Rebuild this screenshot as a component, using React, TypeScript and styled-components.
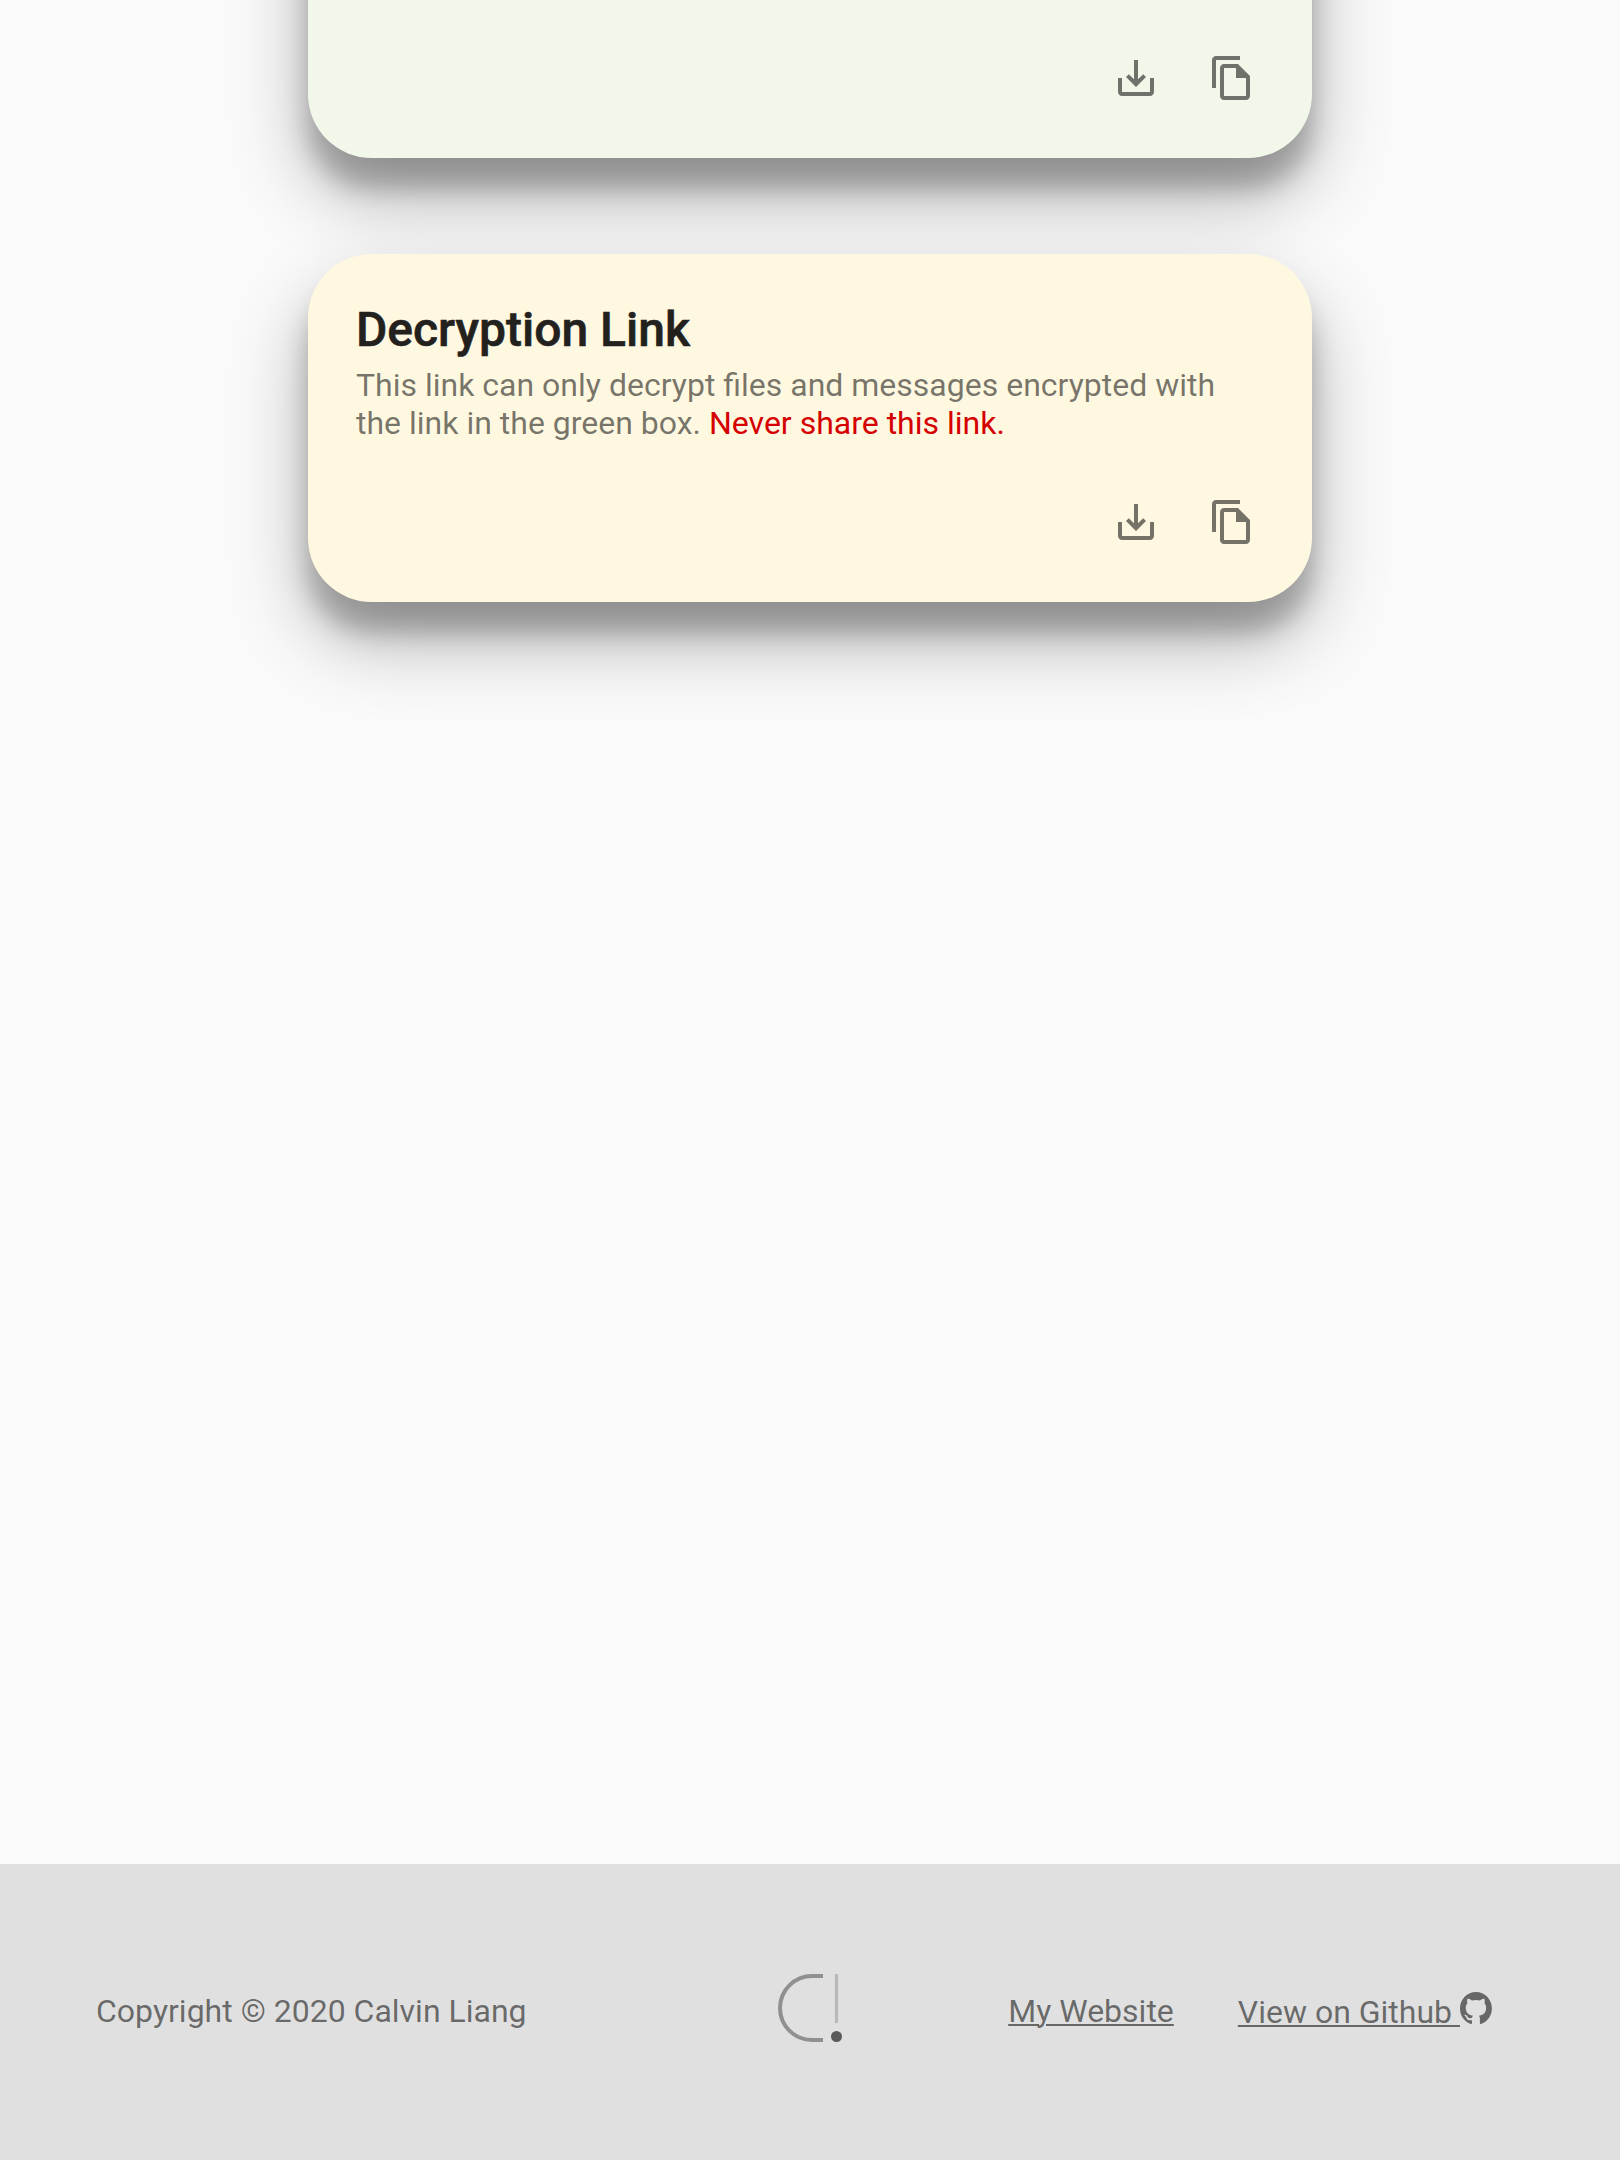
import React from "react";
import styled, { createGlobalStyle } from "styled-components";

const GlobalStyle = createGlobalStyle`
  * { box-sizing: border-box; }
  body {
    margin: 0;
    background: #fafafa;
    font-family: Roboto, "Liberation Sans", sans-serif;
    -webkit-font-smoothing: antialiased;
  }
`;

const Page = styled.div`
  height: 2160px;
  display: flex;
  flex-direction: column;
  overflow: hidden;
`;

const Main = styled.main`
  flex: 1;
  display: flex;
  flex-direction: column;
  align-items: center;
  gap: 96px;
`;

const Card = styled.section<{ $color: string; $cut?: boolean }>`
  width: 1004px;
  height: 348px;
  margin-top: ${(p) => (p.$cut ? -190 : 0)}px;
  padding: 48px;
  border-radius: 64px;
  background: ${(p) => p.$color};
  box-shadow: 0 38px 76px rgba(0, 0, 0, 0.3), 0 30px 24px rgba(0, 0, 0, 0.22);
  display: flex;
  flex-direction: column;
`;

const Title = styled.h2`
  margin: 0;
  font-size: 48px;
  line-height: 56px;
  font-weight: 500;
  -webkit-text-stroke: 0.6px #22211e;
  color: #22211e;
`;

const Description = styled.p`
  margin: 8px 0 0;
  font-size: 32px;
  line-height: 38px;
  color: rgba(0, 0, 0, 0.54);
`;

const Warning = styled.span`
  color: #d50000;
`;

const Actions = styled.div`
  margin: auto -16px -16px 0;
  display: flex;
  justify-content: flex-end;
`;

const IconButton = styled.button`
  width: 96px;
  height: 96px;
  padding: 24px;
  border: 0;
  background: none;
  color: rgba(0, 0, 0, 0.54);
  svg {
    display: block;
    width: 48px;
    height: 48px;
    fill: currentColor;
  }
`;

const Footer = styled.footer`
  height: 296px;
  padding: 0 96px 2px;
  display: grid;
  grid-template-columns: 1fr 64px 1fr;
  align-items: center;
  background: #e0e0e0;
  color: rgba(0, 0, 0, 0.54);
  font-size: 32px;
  line-height: 38px;
`;

const Copyright = styled.div`
  white-space: nowrap;
`;

const Logo = styled.svg`
  display: block;
  width: 64px;
  height: 68px;
  margin-bottom: 6px;
`;

const Links = styled.nav`
  height: 38px;
  padding-right: 32px;
  display: flex;
  justify-content: flex-end;
  align-items: flex-start;
  gap: 64px;
`;

const Link = styled.a`
  color: inherit;
  text-decoration: underline;
  text-decoration-thickness: 2px;
  text-underline-offset: 2px;
  white-space: pre;
`;

const GithubMark = styled.svg`
  width: 32px;
  height: 32px;
  vertical-align: -1px;
  fill: currentColor;
`;

function CardActions() {
  return (
    <Actions>
      <IconButton aria-label="Download">
        <svg viewBox="0 0 24 24">
          <path d="M19 12v7H5v-7H3v7c0 1.1.9 2 2 2h14c1.1 0 2-.9 2-2v-7h-2zm-6 .67l2.59-2.58L17 11.5l-5 5-5-5 1.41-1.41L11 12.67V3h2v9.67z" />
        </svg>
      </IconButton>
      <IconButton aria-label="Copy">
        <svg viewBox="0 0 24 24">
          <path d="M16 1H4c-1.1 0-2 .9-2 2v14h2V3h12V1zm-1 4H8c-1.1 0-1.99.9-1.99 2L6 21c0 1.1.89 2 1.99 2H19c1.1 0 2-.9 2-2V11l-6-6zM8 21V7h6v5h5v9H8z" />
        </svg>
      </IconButton>
    </Actions>
  );
}

export default function App() {
  return (
    <Page>
      <GlobalStyle />
      <Main>
        <Card $color="#f1f8e9" $cut>
          <CardActions />
        </Card>
        <Card $color="#fff8e1">
          <Title>Decryption Link</Title>
          <Description>
            This link can only decrypt files and messages encrypted with the link in the green box.{" "}
            <Warning>Never share this link.</Warning>
          </Description>
          <CardActions />
        </Card>
      </Main>
      <Footer>
        <Copyright>Copyright © 2020 Calvin Liang</Copyright>
        <Logo viewBox="0 0 64 68">
          <path d="M45 2H34a32 32 0 0 0 0 64h11" fill="none" stroke="#909090" strokeWidth="4" />
          <path d="M58.5 0v49" stroke="#b9b9b9" strokeWidth="3.2" />
          <circle cx="58.5" cy="62.5" r="5.5" fill="#5a5a5a" />
        </Logo>
        <Links>
          <Link>My Website</Link>
          <Link>
            {"View on Github "}
            <GithubMark viewBox="0 0 98 96" preserveAspectRatio="none">
              <path d="M48.854 0C21.839 0 0 22 0 49.217c0 21.756 13.993 40.172 33.405 46.69 2.427.49 3.316-1.059 3.316-2.362 0-1.141-.08-5.052-.08-9.127-13.59 2.934-16.42-5.867-16.42-5.867-2.184-5.704-5.42-7.17-5.42-7.17-4.448-3.015.324-3.015.324-3.015 4.934.326 7.523 5.052 7.523 5.052 4.367 7.496 11.404 5.378 14.235 4.074.404-3.178 1.699-5.378 3.074-6.6-10.839-1.141-22.243-5.378-22.243-24.283 0-5.378 1.94-9.778 5.014-13.2-.485-1.222-2.184-6.275.486-13.038 0 0 4.125-1.304 13.426 5.052a46.97 46.97 0 0 1 12.214-1.63c4.125 0 8.33.571 12.213 1.63 9.302-6.356 13.427-5.052 13.427-5.052 2.67 6.763.97 11.816.485 13.038 3.155 3.422 5.015 7.822 5.015 13.2 0 18.905-11.404 23.06-22.324 24.283 1.78 1.548 3.316 4.481 3.316 9.126 0 6.6-.08 11.897-.08 13.526 0 1.304.89 2.853 3.316 2.364 19.412-6.52 33.405-24.935 33.405-46.691C97.707 22 75.788 0 48.854 0z" />
            </GithubMark>
          </Link>
        </Links>
      </Footer>
    </Page>
  );
}
